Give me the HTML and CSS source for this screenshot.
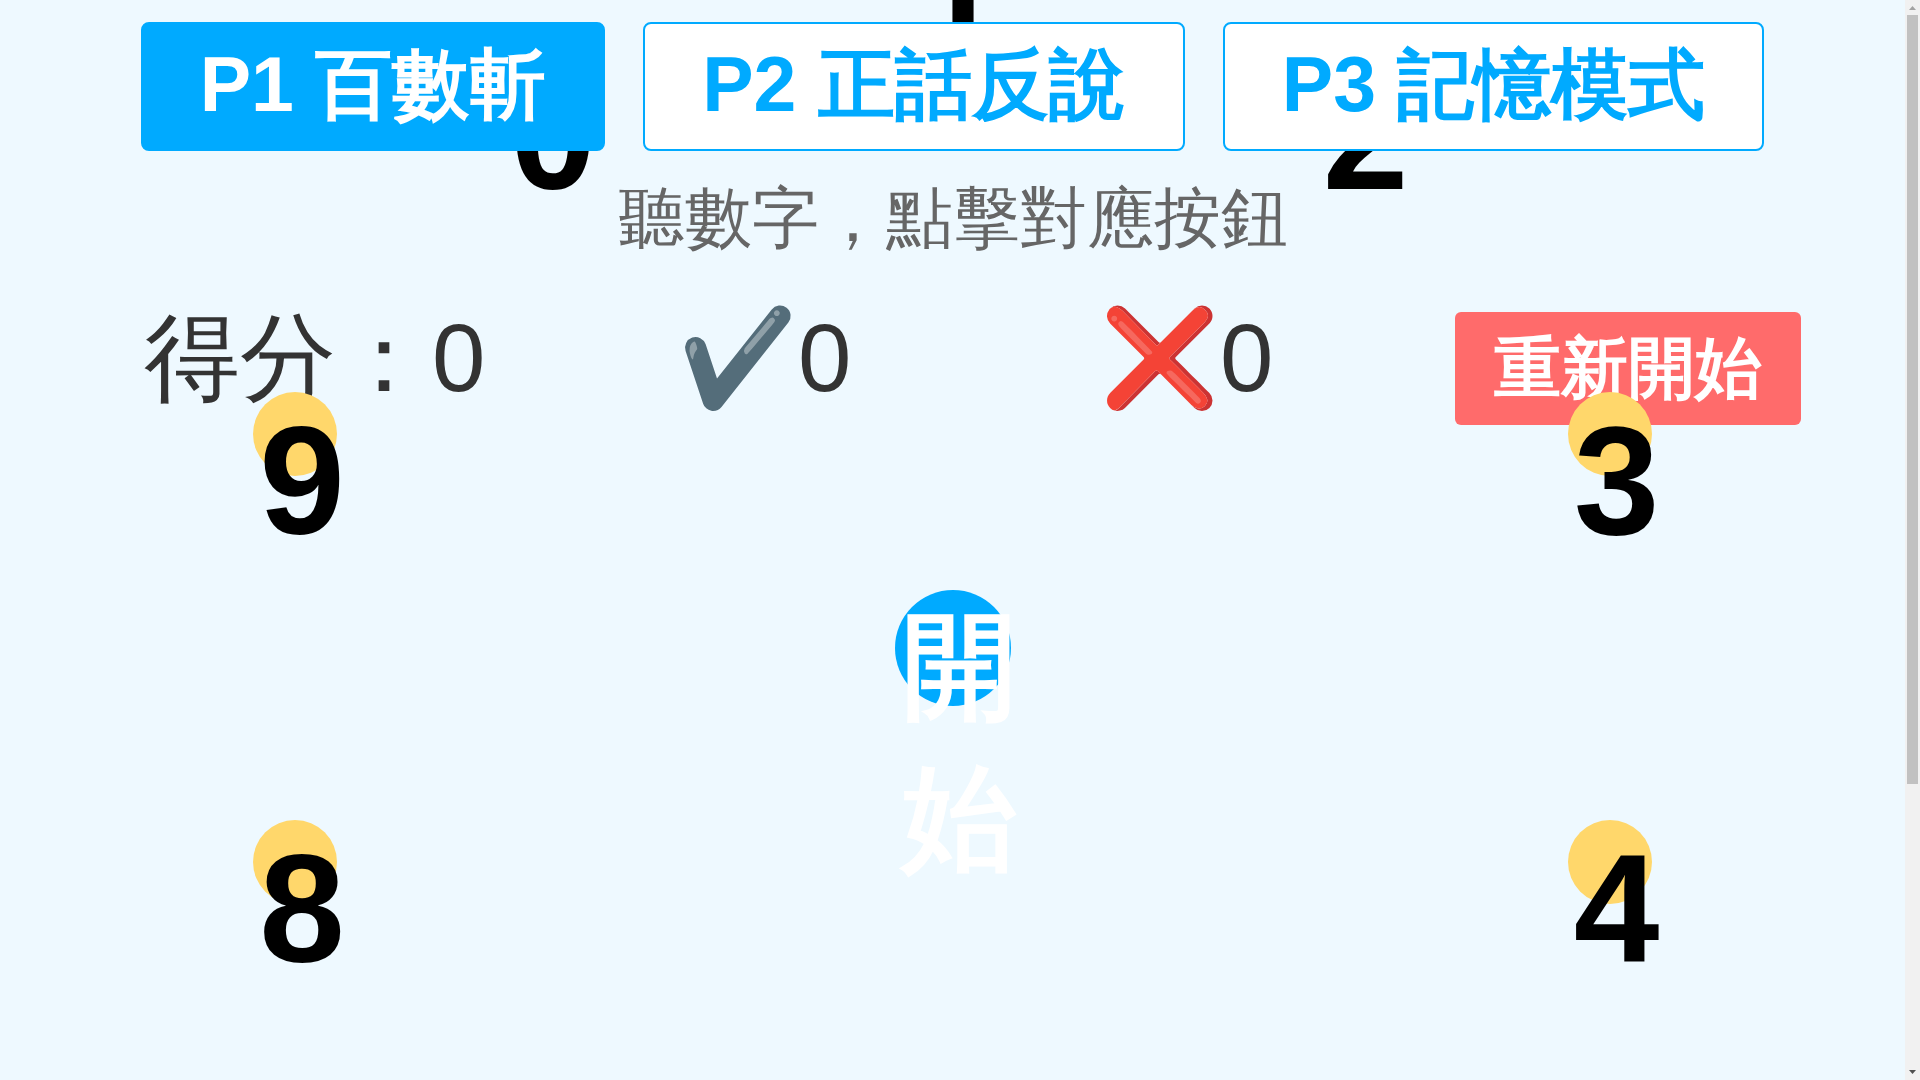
FILE: index.html
```html
<!DOCTYPE html>
<html lang="zh-Hant">
<head>
<meta charset="utf-8">
<meta name="viewport" content="width=device-width, initial-scale=1">
<title>百數斬</title>
<link rel="stylesheet" href="styles.css">
</head>
<body>
<div class="page">
  <nav class="tabs">
    <button class="tab active" type="button">P1 百數斬</button>
    <button class="tab" type="button">P2 正話反說</button>
    <button class="tab" type="button">P3 記憶模式</button>
  </nav>
  <p class="hint">聽數字，點擊對應按鈕</p>
  <section class="stats">
    <div>得分：<span>0</span></div>
    <div>✔️<span>0</span></div>
    <div>❌<span>0</span></div>
    <button class="restart" type="button">重新開始</button>
  </section>
  <main class="dial">
    <button class="num n0" type="button">0</button>
    <button class="num n1" type="button">1</button>
    <button class="num n2" type="button">2</button>
    <button class="num n3" type="button">3</button>
    <button class="num n4" type="button">4</button>
    <button class="num n5" type="button">5</button>
    <button class="num n6" type="button">6</button>
    <button class="num n7" type="button">7</button>
    <button class="num n8" type="button">8</button>
    <button class="num n9" type="button">9</button>
    <button class="start" type="button">開始</button>
  </main>
</div>
<div class="scrollbar" aria-hidden="true">
  <svg class="arrow up" viewBox="0 0 15 15"><path d="M4 10 7.500 6 11 10z"/></svg>
  <div class="track"><div class="thumb"></div></div>
  <svg class="arrow down" viewBox="0 0 15 15"><path d="M4 5h7L7.500 9z"/></svg>
</div>
</body>
</html>
```
FILE: styles.css
```css
* {
  box-sizing: border-box;
}

html {
  scrollbar-width: none;
}

body {
  display: grid;
  grid-template-columns: minmax(0, 1fr) 15px;
  align-items: start;
  margin: 0;
  background: #eef9ff;
  color: #333;
  font-family: "Liberation Sans", Arial, sans-serif;
}

button {
  font-family: inherit;
  font-weight: bold;
  border: 0;
  cursor: pointer;
}

.page {
  position: relative;
}

.tabs {
  position: relative;
  z-index: 10;
  display: flex;
  justify-content: center;
  gap: 38px;
  padding-top: 22px;
}

.tab {
  padding: 16px 57px 20px;
  border: 2px solid #00aaff;
  border-radius: 8px;
  background: #fff;
  color: #00aaff;
  font-size: 77px;
  line-height: 89px;
}

.tab.active {
  background: #00aaff;
  color: #fff;
}

.hint {
  margin: 28px 0 46px;
  color: #666;
  font-size: 67px;
  line-height: 78px;
  text-align: center;
}

.stats {
  display: grid;
  grid-template-columns: 534fr 422fr 355fr 450fr;
  align-items: baseline;
  justify-items: start;
  padding-left: 144px;
  font-size: 96px;
  line-height: 110px;
}

.restart {
  padding: 17px 39px 19px;
  border-radius: 6px;
  background: #ff6b6b;
  color: #fff;
  font-size: 67px;
  line-height: 77px;
}

/* Ten digits on a ring around the start button */
.dial {
  position: absolute;
  top: 648px;
  left: 50%;
}

.num,
.start {
  position: absolute;
  padding: 1px 6px;
  border-radius: 50%;
}

.num {
  --r: 36vw;
  left: calc(cos(var(--a)) * var(--r) - 42px);
  top: calc(sin(var(--a)) * var(--r) - 42px);
  width: 84px;
  height: 84px;
  background: #ffd76b;
  color: #000;
  font-size: 154px;
}

.n0 { --a: -126deg; }
.n1 { --a: -90deg; }
.n2 { --a: -54deg; }
.n3 { --a: -18deg; }
.n4 { --a: 18deg; }
.n5 { --a: 54deg; }
.n6 { --a: 90deg; }
.n7 { --a: 126deg; }
.n8 { --a: 162deg; }
.n9 { --a: 198deg; }

.start {
  left: -58px;
  top: -58px;
  width: 116px;
  height: 116px;
  padding: 0 7px;
  background: #00aaff;
  color: #fff;
  font-size: 115px;
  line-height: 152px;
}

.scrollbar {
  position: sticky;
  top: 0;
  display: flex;
  flex-direction: column;
  height: 100vh;
  background: #f1f1f1;
}

.arrow {
  display: block;
  width: 15px;
  height: 15px;
}

.up {
  fill: #a3a3a3;
}

.down {
  fill: #505050;
}

.track {
  flex: 1;
  display: grid;
  grid-template-rows: 769fr 281fr;
  padding: 0 2px;
}

.thumb {
  background: #c1c1c1;
}
```
